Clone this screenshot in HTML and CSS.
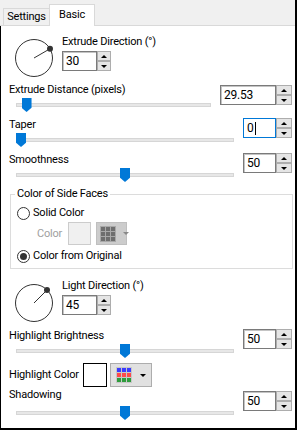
FILE: index.html
```html
<!DOCTYPE html>
<html lang="en">
<head>
  <meta charset="UTF-8" />
  <meta name="viewport" content="width=device-width, initial-scale=1.0" />
  <title>Extrude</title>
  <link rel="stylesheet" href="styles.css">
</head>
<body>
  <div class="window">
    <div class="tabs">
      <div class="tab">Settings</div>
      <div class="tab active">Basic</div>
    </div>

    <div class="panel">
      <div class="dial-row">
        <svg class="dial" width="40" height="40" viewBox="0 0 40 40">
          <circle cx="20" cy="20" r="18.5" fill="none" stroke="#333" />
          <line x1="20" y1="20" x2="36" y2="10.75" stroke="#333" />
          <circle cx="36" cy="10.75" r="3" fill="#333" />
        </svg>
        <div class="dial-fields">
          <div class="label">Extrude Direction (°)</div>
          <div class="spin small">
            <div class="field">30</div>
            <div class="spin-btns"><span class="up"></span><span class="down"></span></div>
          </div>
        </div>
      </div>

      <div class="slider-row first">
        <div class="label">Extrude Distance (pixels)</div>
        <div class="spin wide">
          <div class="field">29.53</div>
          <div class="spin-btns"><span class="up"></span><span class="down"></span></div>
        </div>
        <div class="slider"><div class="track"></div><div class="thumb" style="--v: 0.03"></div></div>
      </div>

      <div class="slider-row">
        <div class="label">Taper</div>
        <div class="spin">
          <div class="field focused">0<span class="caret"></span></div>
          <div class="spin-btns"><span class="up"></span><span class="down"></span></div>
        </div>
        <div class="slider"><div class="track"></div><div class="thumb" style="--v: 0"></div></div>
      </div>

      <div class="slider-row">
        <div class="label">Smoothness</div>
        <div class="spin">
          <div class="field">50</div>
          <div class="spin-btns"><span class="up"></span><span class="down"></span></div>
        </div>
        <div class="slider"><div class="track"></div><div class="thumb" style="--v: 0.5"></div></div>
      </div>

      <fieldset class="group">
        <legend>Color of Side Faces</legend>
        <div class="radio-row"><span class="radio"></span>Solid Color</div>
        <div class="color-row sub">
          <span class="color-label">Color</span>
          <span class="swatch"></span>
          <span class="picker">
            <span class="grid"><i></i><i></i><i></i><i></i><i></i><i></i><i></i><i></i><i></i></span>
            <span class="arrow"></span>
          </span>
        </div>
        <div class="radio-row last"><span class="radio checked"></span>Color from Original</div>
      </fieldset>

      <div class="dial-row second">
        <svg class="dial" width="40" height="40" viewBox="0 0 40 40">
          <circle cx="20" cy="20" r="18.5" fill="none" stroke="#333" />
          <line x1="20" y1="20" x2="33" y2="7" stroke="#333" />
          <circle cx="33" cy="7" r="3" fill="#333" />
        </svg>
        <div class="dial-fields">
          <div class="label">Light Direction (°)</div>
          <div class="spin small">
            <div class="field">45</div>
            <div class="spin-btns"><span class="up"></span><span class="down"></span></div>
          </div>
        </div>
      </div>

      <div class="slider-row after-dial">
        <div class="label">Highlight Brightness</div>
        <div class="spin">
          <div class="field">50</div>
          <div class="spin-btns"><span class="up"></span><span class="down"></span></div>
        </div>
        <div class="slider"><div class="track"></div><div class="thumb" style="--v: 0.5"></div></div>
      </div>

      <div class="color-row">
        <span class="color-label">Highlight Color</span>
        <span class="swatch white"></span>
        <span class="picker">
          <span class="grid rgb"><i></i><i></i><i></i><i></i><i></i><i></i><i></i><i></i><i></i></span>
          <span class="arrow"></span>
        </span>
      </div>

      <div class="slider-row shadow">
        <div class="label">Shadowing</div>
        <div class="spin">
          <div class="field">50</div>
          <div class="spin-btns"><span class="up"></span><span class="down"></span></div>
        </div>
        <div class="slider"><div class="track"></div><div class="thumb" style="--v: 0.5"></div></div>
      </div>
    </div>
  </div>
</body>
</html>
```

FILE: styles.css
```css
body {
  margin: 0;
  font-family: Roboto, "Liberation Sans", sans-serif;
  font-size: 11px;
  line-height: 14px;
  letter-spacing: -0.2px;
  color: #000;
}
.window {
  width: 297px;
  height: 430px;
  box-sizing: border-box;
  border-right: 2px solid #000;
  border-bottom: 2px solid #000;
  display: flex;
  flex-direction: column;
  background-color: #f0f0f0;
}

/* tabs */
.tabs {
  height: 25px;
  flex: none;
  display: flex;
  align-items: flex-end;
  padding-left: 3px;
  border-bottom: 1px solid #d9d9d9;
}
.tab {
  width: 47px;
  height: 17px;
  box-sizing: border-box;
  border: 1px solid #d9d9d9;
  border-bottom: none;
  text-align: center;
  line-height: 16px;
}
.tab.active {
  width: 46px;
  height: 22px;
  margin: 0 0 -1px -1px;
  background-color: #fff;
  line-height: 20px;
  position: relative;
}

.panel {
  flex: 1;
  background-color: #fff;
  border-left: 1px solid #000;
}

/* dial rows */
.dial-row {
  display: flex;
  gap: 8px;
  padding-left: 13px;
  margin-top: 9px;
}
.dial {
  flex: none;
  margin-top: 3px;
}
.dial-row.second {
  margin-top: 10px;
}
.dial-row.second .dial {
  margin-top: 4px;
}

/* spin boxes */
.spin {
  display: flex;
  height: 20px;
  margin-top: 2px;
}
.field {
  width: 33px;
  box-sizing: border-box;
  border: 1px solid #7a7a7a;
  box-shadow: inset 1px 1px 0 #c4c4c4;
  padding-left: 3px;
  line-height: 18px;
  font-size: 12px;
  display: flex;
  align-items: center;
}
.spin.small .field {
  width: 35px;
}
.spin.wide .field {
  width: 56px;
}
.field.focused {
  border-color: #0078d7;
  box-shadow: none;
}
.caret {
  width: 1px;
  height: 13px;
  margin-left: 1px;
  background-color: #000;
}
.spin-btns {
  width: 16px;
  display: flex;
  flex-direction: column;
}
.spin.small .spin-btns {
  width: 14px;
}
.spin-btns span {
  flex: 1;
  box-sizing: border-box;
  border: 1px solid #adadad;
  background-color: #e5e5e5;
  display: flex;
  align-items: center;
  justify-content: center;
}
.spin-btns span::after {
  content: "";
  border-left: 3px solid transparent;
  border-right: 3px solid transparent;
}
.spin-btns .up::after {
  border-bottom: 3px solid #000;
}
.spin-btns .down::after {
  border-top: 3px solid #000;
}

/* slider rows */
.slider-row {
  display: grid;
  grid-template-columns: 1fr auto;
  column-gap: 9px;
  padding: 0 3px 0 8px;
  margin-top: 6px;
}
.slider-row.first {
  margin-top: 5px;
}
.slider-row.first .spin {
  margin-top: 2px;
}
.slider-row.after-dial {
  margin-top: 6px;
}
.slider-row .label {
  grid-column: 1;
  grid-row: 1;
}
.slider-row .spin {
  grid-column: 2;
  grid-row: 1 / span 2;
  align-self: start;
  margin-top: 0;
}
.slider {
  grid-column: 1;
  grid-row: 2;
  height: 14px;
  margin: 1px 0 0 7px;
  position: relative;
}
.track {
  margin-top: 5px;
  height: 4px;
  box-sizing: border-box;
  border: 1px solid #d6d6d6;
  background-color: #e7e7e7;
}
.thumb {
  position: absolute;
  top: 0;
  left: calc((100% - 10px) * var(--v));
  width: 10px;
  height: 14px;
  background-color: #0078d7;
  clip-path: polygon(0 0, 100% 0, 100% 70%, 50% 100%, 0 70%);
}
.slider-row.shadow {
  margin-top: 1px;
}
.slider-row.shadow .spin {
  margin-top: 3px;
}
.slider-row.shadow .slider {
  margin-top: 4px;
}

/* group box */
.group {
  margin: 5px 2px 0 9px;
  padding: 5px 0 5px 0;
  border: 1px solid #dcdcdc;
  min-width: 0;
}
.group legend {
  margin-left: 4px;
  padding: 0 2px;
}
.radio-row {
  display: flex;
  align-items: center;
  gap: 3px;
  padding-left: 6px;
  height: 14px;
}
.radio-row.last {
  margin-top: 4px;
}
.radio {
  width: 13px;
  height: 13px;
  box-sizing: border-box;
  border: 1px solid #333;
  border-radius: 50%;
  background-color: #fff;
  display: flex;
  align-items: center;
  justify-content: center;
}
.radio.checked::after {
  content: "";
  width: 7px;
  height: 7px;
  border-radius: 50%;
  background-color: #333;
}

/* color pickers */
.color-row {
  display: flex;
  align-items: center;
  height: 24px;
  padding-left: 8px;
  margin-top: 5px;
}
.color-label {
  width: 74px;
  flex: none;
  white-space: nowrap;
}
.swatch {
  width: 24px;
  height: 24px;
  flex: none;
  box-sizing: border-box;
  border: 1px solid #000;
  background-color: #fff;
}
.picker {
  width: 42px;
  height: 24px;
  flex: none;
  margin-left: 3px;
  box-sizing: border-box;
  border: 1px solid #adadad;
  background-color: #e1e1e1;
  display: flex;
  align-items: center;
  padding-left: 5px;
}
.grid {
  display: grid;
  grid-template-columns: repeat(3, 4px);
  grid-auto-rows: 4px;
  gap: 1px;
  padding: 1px;
  background-color: #a8a8a8;
}
.grid i {
  background-color: #6e6e6e;
}
.grid.rgb {
  background-color: #c8c8c8;
}
.grid.rgb i:nth-child(-n+3) {
  background-color: #3b3bff;
}
.grid.rgb i:nth-child(n+4) {
  background-color: #ff4a4a;
}
.grid.rgb i:nth-child(n+7) {
  background-color: #2e9c3c;
}
.arrow {
  margin-left: 8px;
  border-left: 3px solid transparent;
  border-right: 3px solid transparent;
  border-top: 3px solid #000;
}

.color-row.sub {
  height: 23px;
  padding-left: 26px;
  margin-top: 2px;
}
.color-row.sub .color-label {
  width: 31px;
  color: #a0a0a0;
}
.color-row.sub .swatch {
  width: 23px;
  height: 23px;
  border-color: #cccccc;
  background-color: #f0f0f0;
}
.color-row.sub .picker {
  width: 31px;
  height: 23px;
  margin-left: 5px;
  padding-left: 3px;
  border-color: #bfbfbf;
  background-color: #cccccc;
}
.color-row.sub .arrow {
  margin-left: 7px;
  border-top-color: #888;
}
```
